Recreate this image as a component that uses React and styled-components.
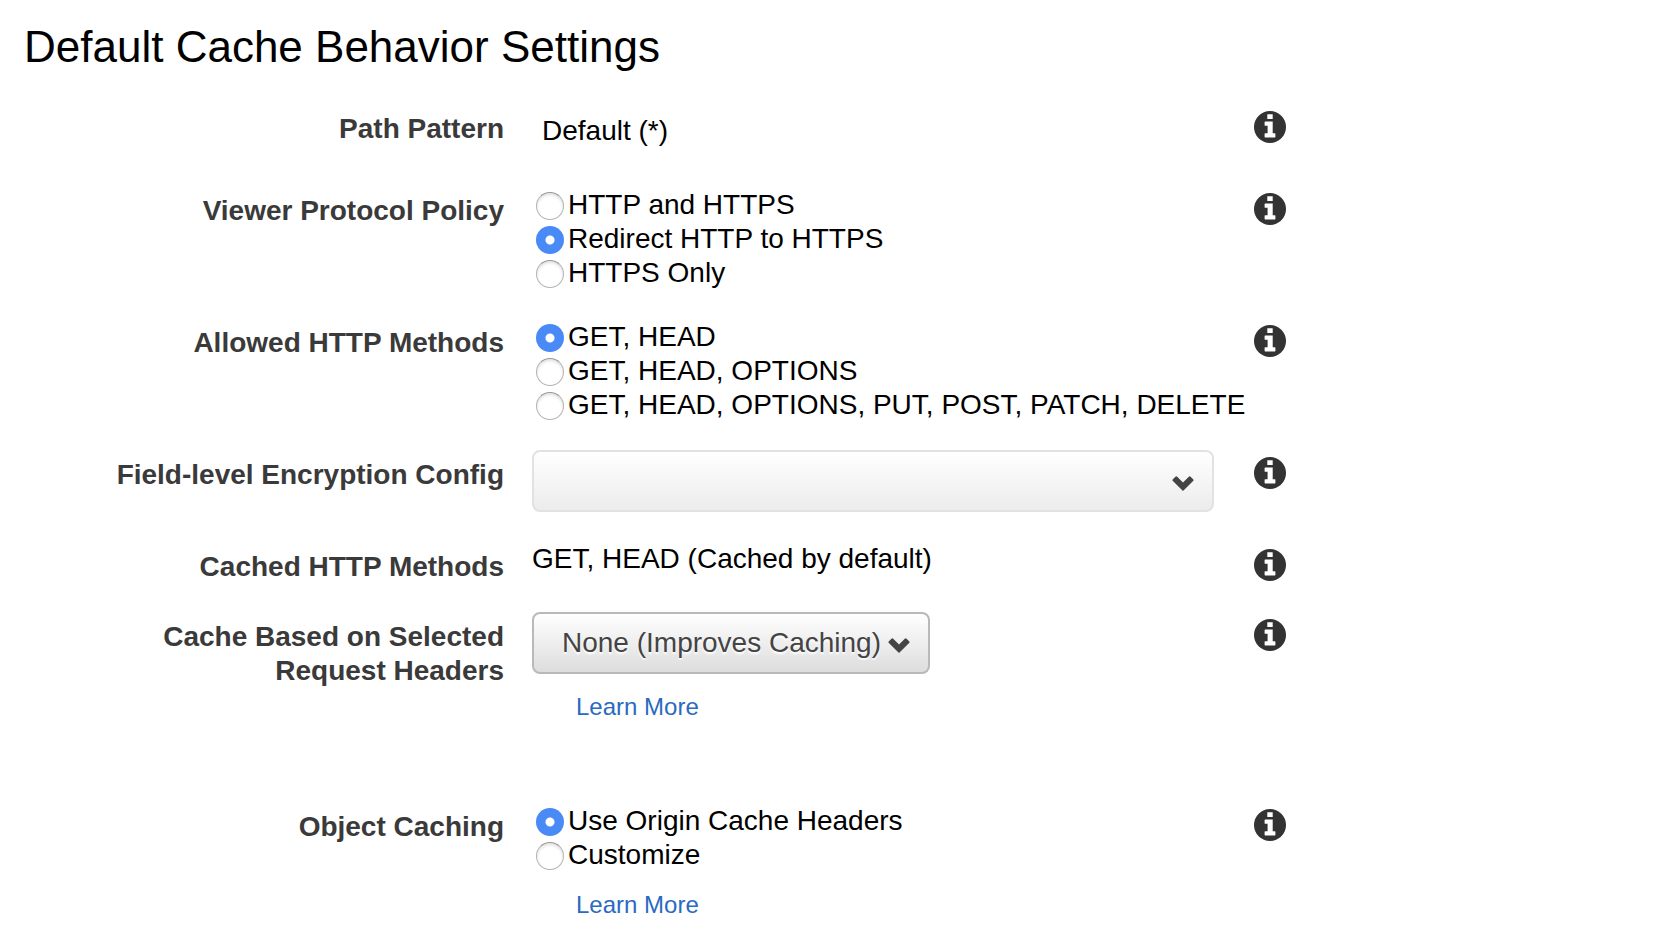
import { useState } from "react";
import styled, { createGlobalStyle } from "styled-components";

const InfoButton = ({ topic }) => (
  <InfoControl type="button" aria-label={`About ${topic}`}>
    <svg width="32" height="32" viewBox="0 0 32 32" aria-hidden="true">
      <circle cx="16" cy="16" r="16" fill="#333" />
      <path
        fill="#fff"
        d="M13.300 3.300h5.400v4.700h-5.400zM11.200 10.600h7.500v11.600h2.100q.6 0 .6.600v3q0 .6-.6.600H11.200q-.6 0-.6-.6v-3q0-.6.6-.6h2.400v-7.400h-2.400q-.6 0-.6-.6v-3q0-.6.6-.6z"
      />
    </svg>
  </InfoControl>
);

const Row = ({ id, label, htmlFor, children }) => (
  <SettingRow>
    <LabelCell>
      {htmlFor ? (
        <label htmlFor={htmlFor}>{label}</label>
      ) : (
        <span id={id}>{label}</span>
      )}
    </LabelCell>
    <div>{children}</div>
    <InfoButton topic={label} />
  </SettingRow>
);

const RadioGroup = ({ name, options, initial }) => {
  const [value, setValue] = useState(initial);

  return (
    <RadioList role="radiogroup" aria-labelledby={`${name}-label`}>
      {options.map((option) => (
        <RadioLabel key={option}>
          <input
            type="radio"
            name={name}
            value={option}
            checked={value === option}
            onChange={() => setValue(option)}
          />
          {option}
        </RadioLabel>
      ))}
    </RadioList>
  );
};

const Dropdown = ({ id, options, muted, wide }) => (
  <SelectWrapper $wide={wide}>
    <Select id={id} $muted={muted}>
      {options.map((option) => (
        <option key={option}>{option}</option>
      ))}
    </Select>
    <Chevron width="22" height="15" viewBox="0 0 22 15" aria-hidden="true">
      <path
        fill="#444"
        d="M11 15 .9 5.1a1.3 1.3 0 0 1 0-1.8L3.4.8a1.3 1.3 0 0 1 1.8 0L11 6.600l5.800-5.800a1.300 1.300 0 0 1 1.800 0l2.500 2.500a1.300 1.300 0 0 1 0 1.800z"
      />
    </Chevron>
  </SelectWrapper>
);

const App = () => {
  return (
    <Page>
      <GlobalStyle />
      <Title>Default Cache Behavior Settings</Title>
      <Settings>
        <Row label="Path Pattern">
          <PathValue>Default (*)</PathValue>
        </Row>
        <Row id="viewer-label" label="Viewer Protocol Policy">
          <RadioGroup
            name="viewer"
            initial="Redirect HTTP to HTTPS"
            options={["HTTP and HTTPS", "Redirect HTTP to HTTPS", "HTTPS Only"]}
          />
        </Row>
        <Row id="methods-label" label="Allowed HTTP Methods">
          <RadioGroup
            name="methods"
            initial="GET, HEAD"
            options={[
              "GET, HEAD",
              "GET, HEAD, OPTIONS",
              "GET, HEAD, OPTIONS, PUT, POST, PATCH, DELETE",
            ]}
          />
        </Row>
        <Row htmlFor="encryption" label="Field-level Encryption Config">
          <Dropdown id="encryption" options={[""]} muted wide />
        </Row>
        <Row label="Cached HTTP Methods">GET, HEAD (Cached by default)</Row>
        <Row htmlFor="headers" label="Cache Based on Selected Request Headers">
          <Dropdown id="headers" options={["None (Improves Caching)"]} />
          <LearnMore href="#headers">Learn More</LearnMore>
          <Spacer />
        </Row>
        <Row id="caching-label" label="Object Caching">
          <RadioGroup
            name="caching"
            initial="Use Origin Cache Headers"
            options={["Use Origin Cache Headers", "Customize"]}
          />
          <LearnMore href="#caching-label">Learn More</LearnMore>
        </Row>
      </Settings>
    </Page>
  );
};

export default App;

const GlobalStyle = createGlobalStyle`
  * {
    box-sizing: border-box;
  }

  body {
    margin: 0;
    background-color: #fff;
    color: #000;
    font-family: "Liberation Sans", Arial, sans-serif;
    font-size: 28px;
    line-height: 34px;
  }
`;

const Page = styled.main`
  padding: 21px 24px 16px;
`;

const Title = styled.h1`
  margin: 0 0 31px;
  font-size: 44px;
  font-weight: 400;
  line-height: 52px;
`;

const Settings = styled.form`
  display: flex;
  flex-direction: column;
  gap: 28px;
`;

const SettingRow = styled.div`
  display: grid;
  grid-template-columns: minmax(0, 240fr) minmax(0, 347fr) 32px minmax(0, 160fr);
  column-gap: 28px;
  align-items: start;
`;

const LabelCell = styled.div`
  padding: 8px 0 0 64px;
  color: #3a3a3a;
  font-weight: 700;
  text-align: right;
`;

const InfoControl = styled.button`
  width: 32px;
  height: 32px;
  margin-top: 7px;
  padding: 0;
  border: 0;
  background: none;
  cursor: pointer;

  & svg {
    display: block;
  }
`;

const PathValue = styled.div`
  padding: 10px;
`;

const RadioList = styled.div`
  display: flex;
  flex-direction: column;
  align-items: flex-start;
  padding: 2px 0 0 4px;
`;

const RadioLabel = styled.label`
  display: flex;
  gap: 4px;
  height: 34px;
  white-space: nowrap;

  & input {
    appearance: none;
    flex-shrink: 0;
    width: 28px;
    height: 28px;
    margin: 4px 0 0;
    border: 1px solid #b4b4b4;
    border-top-color: #989898;
    border-radius: 50%;
    background-color: #fff;
    box-shadow: inset 0 2px 3px rgba(0, 0, 0, 0.12);
  }

  & input:checked {
    border: 0;
    background: radial-gradient(circle, #fff 4px, #4a8af6 5px);
    box-shadow: none;
  }
`;

const SelectWrapper = styled.div`
  position: relative;
  width: ${({ $wide }) => ($wide ? "auto" : "fit-content")};
  margin-right: 12px;
  padding-bottom: ${({ $wide }) => ($wide ? "2px" : "0")};
`;

const Select = styled.select`
  appearance: none;
  display: block;
  width: 100%;
  height: 62px;
  padding: 0 46px 0 28px;
  border: 2px solid ${({ $muted }) => ($muted ? "#e2e2e2" : "#b9b9b9")};
  border-radius: 8px;
  background: linear-gradient(
    #fff,
    ${({ $muted }) => ($muted ? "#ececec" : "#dddddd")}
  );
  color: #444;
  font: inherit;
  text-shadow: 0 2px 2px #fff;
  cursor: pointer;
`;

const Chevron = styled.svg`
  position: absolute;
  top: 26px;
  right: 20px;
  pointer-events: none;
`;

const LearnMore = styled.a`
  display: block;
  width: fit-content;
  margin: 16px 0 0 44px;
  color: #2a6ac0;
  font-size: 24px;
  text-decoration: none;
`;

const Spacer = styled.div`
  height: 50px;
`;
